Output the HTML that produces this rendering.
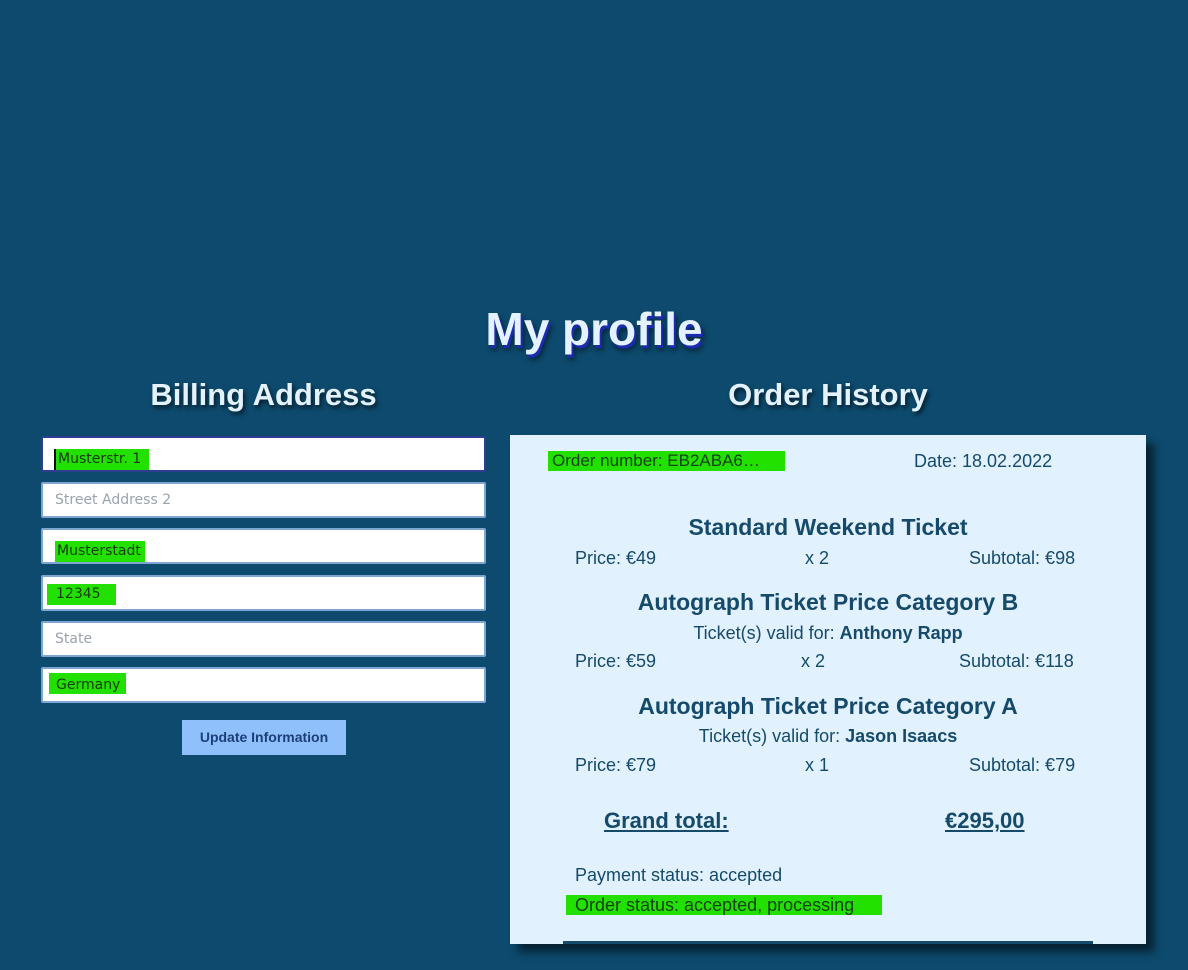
<!DOCTYPE html>
<html><head><meta charset="utf-8"><style>
body{margin:0;width:1188px;height:970px;background:#0d4a6d;font-family:"Liberation Sans",sans-serif;position:relative;overflow:hidden}
.a{position:absolute;white-space:nowrap}
h1,h2{margin:0;position:absolute;color:#e4f2fd;font-weight:bold;text-align:center}
h1{font-size:46px;left:0;width:1188px;top:302px;text-shadow:2px 3px 0 #1a2bb0,3px 5px 6px rgba(0,0,0,.6)}
h2{font-size:31px;top:377px;text-shadow:2px 3px 4px rgba(0,0,0,.6)}
.in{position:absolute;left:41px;width:441px;height:32px;background:#fff;border:2px solid #7fa6d3;border-radius:2px;font-family:"DejaVu Sans",sans-serif;font-size:14px}
.in span{position:absolute;top:8px;color:#1a3a1a}
.ph{color:#9aa3ad!important;left:12px}
.g{background:#22e000}
.card{position:absolute;left:510px;top:435px;width:636px;height:509px;background:#e1f1fd;box-shadow:8px 8px 8px rgba(0,0,0,.55);color:#154a6a}
.card .a{font-size:18px}
.t{font-size:23px!important;font-weight:bold;left:0;width:636px;text-align:center}
.c{left:0;width:636px;text-align:center}
</style></head><body>
<h1>My profile</h1>
<h2 style="left:41px;width:445px">Billing Address</h2>
<h2 style="left:510px;width:636px">Order History</h2>

<div class="in" style="top:436px;border-color:#2d3d90"><span class="g" style="left:11px;top:11px;height:21px;width:91px;padding-left:2px;border-left:2px solid #111;line-height:21px">Musterstr. 1</span></div>
<div class="in" style="top:482px"><span class="ph">Street Address 2</span></div>
<div class="in" style="top:528px"><span class="g" style="left:12px;top:11px;width:88px;height:21px;line-height:20px;padding-left:2px">Musterstadt</span></div>
<div class="in" style="top:575px"><span class="g" style="left:4px;top:7px;width:60px;height:21px;line-height:21px;padding-left:9px">12345</span></div>
<div class="in" style="top:621px"><span class="ph">State</span></div>
<div class="in" style="top:667px"><span class="g" style="left:6px;top:4px;width:70px;height:21px;line-height:24px;padding-left:7px">Germany</span></div>
<div class="a" style="left:182px;top:720px;width:164px;height:35px;background:#8fc0fb;color:#1c3f78;font-weight:bold;font-size:14px;line-height:35px;text-align:center">Update Information</div>

<div class="card">
<div class="a g" style="left:38px;top:16px;height:20px;width:233px;line-height:20px;padding-left:4px;color:#16401e;font-size:17px!important">Order number: EB2ABA6…</div>
<div class="a" style="left:404px;top:16px">Date: 18.02.2022</div>
<div class="a t" style="top:79px">Standard Weekend Ticket</div>
<div class="a" style="left:65px;top:113px">Price: €49</div>
<div class="a" style="left:295px;top:113px">x 2</div>
<div class="a" style="left:459px;top:113px">Subtotal: €98</div>
<div class="a t" style="top:154px">Autograph Ticket Price Category B</div>
<div class="a c" style="top:188px">Ticket(s) valid for: <b>Anthony Rapp</b></div>
<div class="a" style="left:65px;top:216px">Price: €59</div>
<div class="a" style="left:291px;top:216px">x 2</div>
<div class="a" style="left:449px;top:216px">Subtotal: €118</div>
<div class="a t" style="top:258px">Autograph Ticket Price Category A</div>
<div class="a c" style="top:291px">Ticket(s) valid for: <b>Jason Isaacs</b></div>
<div class="a" style="left:65px;top:320px">Price: €79</div>
<div class="a" style="left:295px;top:320px">x 1</div>
<div class="a" style="left:459px;top:320px">Subtotal: €79</div>
<div class="a" style="left:94px;top:373px;font-size:22px;font-weight:bold;text-decoration:underline">Grand total:</div>
<div class="a" style="left:435px;top:373px;font-size:22px;font-weight:bold;text-decoration:underline">€295,00</div>
<div class="a" style="left:65px;top:430px">Payment status: accepted</div>
<div class="a g" style="left:56px;top:460px;height:20px;line-height:20px;width:307px;padding-left:9px;color:#16401e">Order status: accepted, processing</div>
<div class="a" style="left:53px;top:506px;width:530px;height:3px;background:#154a6a"></div>
</div>
</body></html>
